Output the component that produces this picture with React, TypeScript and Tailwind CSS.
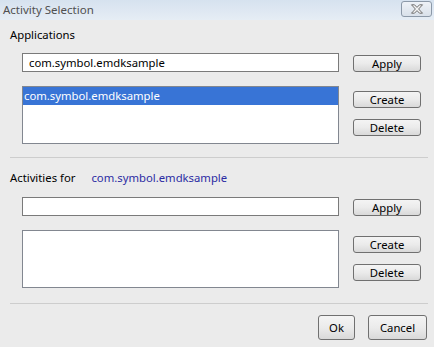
import React from "react";

const font = { fontFamily: '"Noto Sans", "Open Sans", sans-serif' };

function Btn({ label, className = "" }: { label: string; className?: string }) {
  return (
    <div
      className={`flex items-center justify-center border border-[#707070] rounded-[3px] bg-gradient-to-b from-[#f4f4f4] via-[#ebebeb] to-[#d9d9d9] text-[11.3px] text-black leading-none ${className}`}
    >
      {label}
    </div>
  );
}

export default function App() {
  return (
    <div className="w-[434px] h-[347px] bg-[#ebebeb] overflow-hidden" style={font}>
      {/* title bar */}
      <div className="h-[20px] flex items-start justify-between bg-gradient-to-b from-[#d6e2ef] to-[#e6edf5] pl-[3px] pr-[2px]">
        <span className="text-[11.5px] leading-[20px] text-[#505050]">Activity Selection</span>
        <div className="mt-[1px] w-[31px] h-[16px] rounded-[3px] border border-[#8c99a8] bg-gradient-to-b from-[#eef2f7] to-[#d9e1ea] flex items-center justify-center">
          <svg width="14" height="10" viewBox="0 0 14 10">
            <path
              d="M1.5 0.8 H4.5 L7 3.4 L9.5 0.8 H12.5 L8.6 5 L12.5 9.2 H9.5 L7 6.6 L4.5 9.2 H1.5 L5.4 5 Z"
              fill="#f4f4f4"
              stroke="#6e6e6e"
              strokeWidth="1"
              strokeLinejoin="round"
            />
          </svg>
        </div>
      </div>

      <div className="pl-[10px]">
        <div className="mt-[7px] h-[16px] leading-[16px] text-[11.3px] text-black">Applications</div>

        <div className="mt-[10px] pl-[12px] flex items-start">
          <div className="w-[317px] h-[19px] bg-white border border-[#7a7a7a] text-[11.3px] leading-[17px] pl-[6px] text-black">
            com.symbol.emdksample
          </div>
          <Btn label="Apply" className="ml-[14px] mt-[2px] w-[68px] h-[17px]" />
        </div>

        <div className="mt-[14px] pl-[12px] flex items-start">
          <div className="w-[317px] h-[58px] bg-white border border-[#828790]">
            <div className="h-[18px] bg-[#3874d6] text-white text-[11.3px] leading-[18px] pl-[1px]">
              com.symbol.emdksample
            </div>
          </div>
          <div className="ml-[14px] pt-[5px] flex flex-col gap-[11px]">
            <Btn label="Create" className="w-[68px] h-[17px]" />
            <Btn label="Delete" className="w-[68px] h-[17px]" />
          </div>
        </div>

        <div className="mt-[13px] mr-[6px] h-px bg-[#cdcdcd]" />

        <div className="mt-[12px] h-[16px] leading-[16px] text-[11.3px] text-black flex">
          <span>Activities for</span>
          <span className="ml-[16px] text-[#2b2ba3]">com.symbol.emdksample</span>
        </div>

        <div className="mt-[11px] pl-[12px] flex items-start">
          <div className="w-[317px] h-[19px] bg-white border border-[#7a7a7a]" />
          <Btn label="Apply" className="ml-[14px] mt-[2px] w-[68px] h-[17px]" />
        </div>

        <div className="mt-[14px] pl-[12px] flex items-start">
          <div className="w-[317px] h-[58px] bg-white border border-[#828790]" />
          <div className="ml-[14px] pt-[6px] flex flex-col gap-[11px]">
            <Btn label="Create" className="w-[68px] h-[17px]" />
            <Btn label="Delete" className="w-[68px] h-[17px]" />
          </div>
        </div>

        <div className="mt-[15px] mr-[6px] h-px bg-[#cdcdcd]" />

        <div className="mt-[11px] pr-[7px] flex justify-end gap-[13px]">
          <Btn label="Ok" className="w-[37px] h-[25px]" />
          <Btn label="Cancel" className="w-[59px] h-[25px]" />
        </div>
      </div>
    </div>
  );
}
